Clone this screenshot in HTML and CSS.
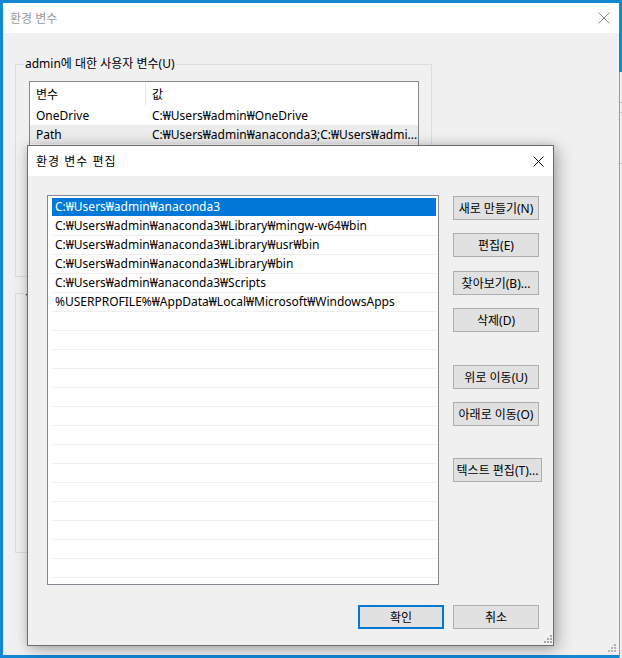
FILE: index.html
```html
<!DOCTYPE html>
<html lang="ko">
<head>
<meta charset="utf-8">
<title>환경 변수 편집</title>
<link rel="stylesheet" href="styles.css">
</head>
<body>
<div class="desk">
  <div class="peek">
    <div class="peek-line l1"></div>
    <div class="peek-line l2"></div>
    <div class="peek-line l3"></div>
  </div>

  <div class="win">
    <div class="titlebar">
      <span class="wtitle">환경 변수</span>
      <svg class="wclose" width="12" height="12" viewBox="0 0 12 12"><path d="M0.5 0.5L11.5 11.5M11.5 0.5L0.5 11.5" stroke="#8a8a8a" stroke-width="1" fill="none"/></svg>
    </div>
    <div class="winbody">
      <div class="group g1">
        <span class="glabel">admin에 대한 사용자 변수(U)</span>
        <div class="lv">
          <div class="lvhead"><span class="c1">변수</span><span class="hdiv"></span><span class="c2">값</span></div>
          <div class="lvrow"><span class="c1">OneDrive</span><span class="c2">C:₩Users₩admin₩OneDrive</span></div>
          <div class="lvrow lsel"><span class="c1">Path</span><span class="c2">C:₩Users₩admin₩anaconda3;C:₩Users₩admi...</span></div>
        </div>
      </div>
      <div class="group g2">
        <span class="glabel">시스템 변수(S)</span>
      </div>
    </div>
    <svg class="grip wgrip" width="8" height="8" viewBox="0 0 8 8"><g fill="#b4b4b4"><rect x="6" y="0" width="2" height="2"/><rect x="3" y="3" width="2" height="2"/><rect x="6" y="3" width="2" height="2"/><rect x="0" y="6" width="2" height="2"/><rect x="3" y="6" width="2" height="2"/><rect x="6" y="6" width="2" height="2"/></g></svg>
  </div>

  <div class="dlg">
    <div class="dtitlebar">
      <span class="dtitle">환경 변수 편집</span>
      <svg class="dclose" width="11" height="11" viewBox="0 0 11 11"><path d="M0.5 0.5L10.5 10.5M10.5 0.5L0.5 10.5" stroke="#000" stroke-width="1" fill="none"/></svg>
    </div>
    <div class="dbody">
      <div class="dmain">
        <div class="listbox">
          <div class="row sel">C:₩Users₩admin₩anaconda3</div>
          <div class="row">C:₩Users₩admin₩anaconda3₩Library₩mingw-w64₩bin</div>
          <div class="row">C:₩Users₩admin₩anaconda3₩Library₩usr₩bin</div>
          <div class="row">C:₩Users₩admin₩anaconda3₩Library₩bin</div>
          <div class="row">C:₩Users₩admin₩anaconda3₩Scripts</div>
          <div class="row">%USERPROFILE%₩AppData₩Local₩Microsoft₩WindowsApps</div>
          <div class="row"></div><div class="row"></div><div class="row"></div><div class="row"></div>
          <div class="row"></div><div class="row"></div><div class="row"></div><div class="row"></div>
          <div class="row"></div><div class="row"></div><div class="row"></div><div class="row"></div>
          <div class="row"></div><div class="row"></div>
        </div>
        <div class="btncol">
          <div class="btn b-new">새로 만들기(N)</div>
          <div class="btn b-edit">편집(E)</div>
          <div class="btn b-browse">찾아보기(B)...</div>
          <div class="btn b-del">삭제(D)</div>
          <div class="btn b-up">위로 이동(U)</div>
          <div class="btn b-down">아래로 이동(O)</div>
          <div class="btn b-text">텍스트 편집(T)...</div>
        </div>
      </div>
      <div class="dfoot">
        <div class="btn ok">확인</div>
        <div class="btn cancel">취소</div>
      </div>
    </div>
    <svg class="grip dgrip" width="8" height="8" viewBox="0 0 8 8"><g fill="#a8a8a8"><rect x="6" y="0" width="2" height="2"/><rect x="3" y="3" width="2" height="2"/><rect x="6" y="3" width="2" height="2"/><rect x="0" y="6" width="2" height="2"/><rect x="3" y="6" width="2" height="2"/><rect x="6" y="6" width="2" height="2"/></g></svg>
  </div>
</div>
</body>
</html>
```
FILE: styles.css
```css
* { box-sizing: border-box; }
html, body { margin: 0; padding: 0; }
body {
  width: 622px;
  height: 658px;
  overflow: hidden;
  font-family: "Noto Sans", "Noto Sans CJK KR", sans-serif;
  font-size: 12px;
  color: #000;
}
.desk {
  position: relative;
  width: 622px;
  height: 658px;
  background: #1487d4;
  overflow: hidden;
}

/* window peeking at far right */
.peek {
  position: absolute;
  left: 619px;
  top: 72px;
  width: 10px;
  height: 600px;
  background: #f0f0f0;
  border-left: 1px solid #9a9a9a;
}
.peek-line { height: 1px; background: #c8c8c8; margin-top: 30px; }
.peek-line.l2 { margin-top: 9px; }
.peek-line.l3 { margin-top: 50px; }

/* outer window */
.win {
  position: absolute;
  left: 3px;
  top: 3px;
  width: 616px;
  height: 652px;
  background: #f0f0f0;
}
.titlebar {
  height: 30px;
  background: #fff;
  display: flex;
  align-items: center;
  justify-content: space-between;
  padding: 0 9px 0 7px;
}
.wtitle { color: #999; font-size: 12px; }
.wclose { display: block; }
.winbody {
  padding: 31px 0 0 12px;
}
.group {
  position: relative;
  border: 1px solid #dcdcdc;
  width: 417px;
}
.g1 { height: 213px; }
.g2 { height: 260px; margin-top: 16px; }
.glabel {
  position: absolute;
  left: 8px;
  top: -9px;
  padding: 0 1px;
  line-height: 16px;
  background: #f0f0f0;
}
.lv {
  margin: 16px 0 0 13px;
  width: 390px;
  height: 200px;
  background: #fff;
  border: 1px solid #828790;
}
.lvhead, .lvrow {
  display: flex;
  align-items: center;
}
.lvhead { height: 24px; position: relative; }
.lvrow { height: 19px; }
.lvrow.lsel { background: #ececec; }
.c1 { width: 116px; padding-left: 6px; flex: none; }
.c2 { padding-left: 6px; white-space: nowrap; }
.hdiv {
  position: absolute;
  left: 115px;
  top: 1px;
  width: 1px;
  height: 22px;
  background: #e5e5e5;
}

.grip { position: absolute; display: block; }
.wgrip { right: 3px; bottom: 3px; }

/* dialog */
.dlg {
  position: absolute;
  left: 27px;
  top: 145px;
  width: 527px;
  height: 501px;
  background: #f0f0f0;
  border: 1px solid #6e6e6e;
  box-shadow: 4px 4px 16px rgba(0, 0, 0, 0.28), 0 0 8px rgba(0, 0, 0, 0.12);
}
.dtitlebar {
  height: 30px;
  background: #fff;
  display: flex;
  align-items: center;
  justify-content: space-between;
  padding: 0 9px 0 8px;
}
.dtitle { font-size: 12px; letter-spacing: 1px; }
.dclose { display: block; }
.dbody {
  padding: 19px 0 0 19px;
}
.dmain { display: flex; }
.listbox {
  width: 392px;
  height: 390px;
  background: #fff;
  border: 1px solid #828790;
  padding: 2px 2px 0 4px;
  overflow: hidden;
}
.row {
  height: 19px;
  line-height: 18px;
  border-bottom: 1px solid #efefef;
  padding-left: 3px;
  white-space: nowrap;
}
.row.sel {
  background: #0078d7;
  color: #fff;
  border-bottom-color: #fff;
}
.btncol {
  margin-left: 14px;
  padding-top: 1px;
  display: flex;
  flex-direction: column;
  align-items: flex-start;
}
.btn {
  width: 86px;
  height: 24px;
  background: #e1e1e1;
  border: 1px solid #adadad;
  display: flex;
  align-items: center;
  justify-content: center;
  white-space: nowrap;
}
.b-edit, .b-del, .b-down { margin-top: 13px; }
.b-browse { margin-top: 14px; }
.b-up { margin-top: 33px; }
.b-text { margin-top: 32px; width: 89px; }
.dfoot {
  display: flex;
  justify-content: flex-end;
  gap: 9px;
  padding-right: 14px;
  margin-top: 20px;
}
.btn.ok { border: 2px solid #0078d7; }
.dgrip { right: 1px; bottom: 2px; }
```
